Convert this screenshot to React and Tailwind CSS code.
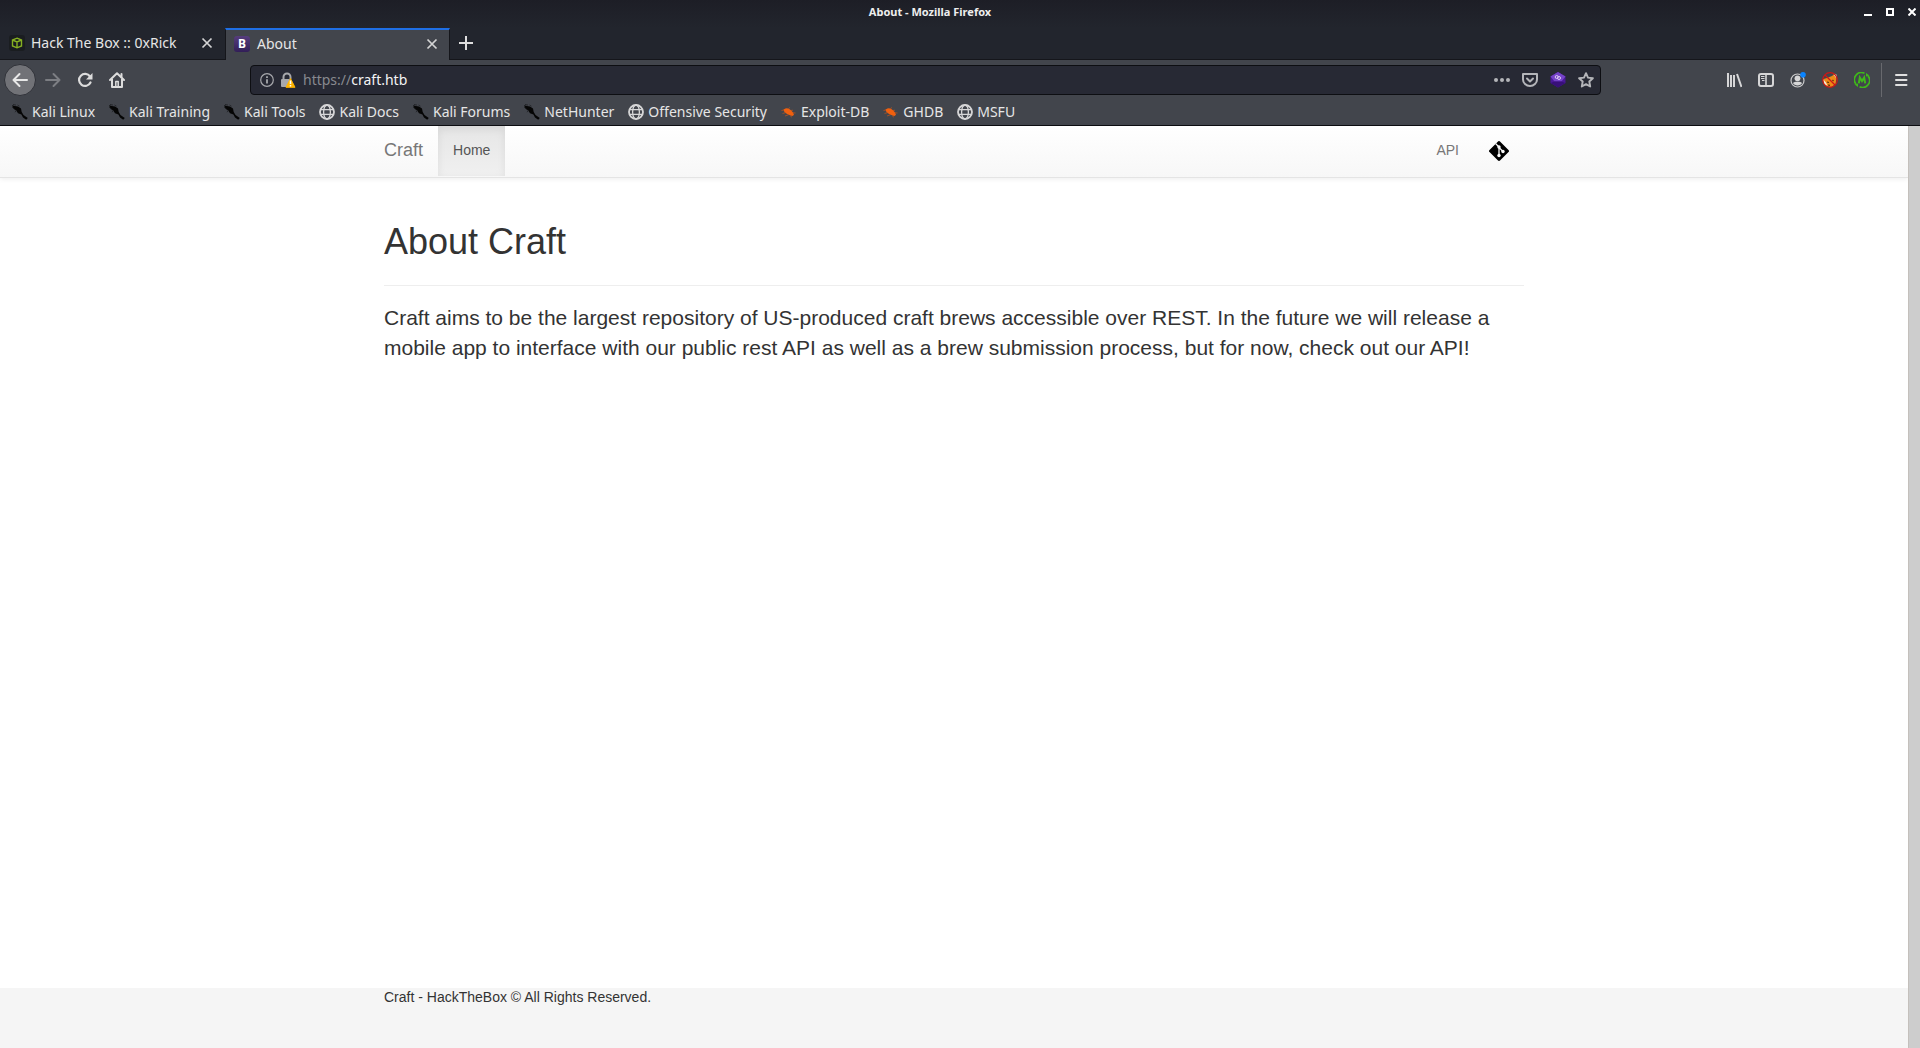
const ui = "font-['Noto_Sans',sans-serif]";
const web = "font-['Liberation_Sans',Arial,sans-serif]";

function Kali() {
  return (
    <svg className="size-4 shrink-0" viewBox="0 0 16 16" aria-hidden="true">
      <path d="M0 1.2 2.8 2 6 2.6 9 4.5 9.7 8 11.5 11 15.8 14 14.2 15.8 11 13.4 9.4 10.5 6 9.3 4.2 6.6 1.5 4.4Z" fill="#050505" />
      <path d="M1 .4 4 1.1M0 3l3 2.6M4.5 6 3 8.2M5.5 1l2 1.2" stroke="#1b1c20" strokeWidth=".7" fill="none" />
    </svg>
  );
}

function Globe() {
  return (
    <svg className="size-4 shrink-0" viewBox="0 0 16 16" fill="none" stroke="#d6d6d7" strokeWidth="1.3" aria-hidden="true">
      <circle cx="8" cy="8" r="7" strokeWidth="1.8" />
      <ellipse cx="8" cy="8" rx="3.4" ry="7" />
      <path d="M1 5.6h14M1 10.4h14" />
    </svg>
  );
}

function Bug() {
  return (
    <svg className="size-4 shrink-0" viewBox="0 0 16 16" aria-hidden="true">
      <path d="M2.500 5.500 5 4.200 7.500 4.500 10 6.200 12 8.500 13 10.800 11.500 12 9.500 11.600 6.500 10.200 3.500 8.200Z" fill="#f0600f" />
      <path d="M.5 6.500 3 6M1.500 9.500l3-.8M4 12 7.500 10.800M9 11.500l2 1.800M7.500 4.500l1.500-1M10 6.500l2-.3M12 8.800l2.500.2" stroke="#b2531f" strokeWidth=".8" fill="none" />
    </svg>
  );
}

const bookmarks = [
  ["Kali Linux", Kali],
  ["Kali Training", Kali],
  ["Kali Tools", Kali],
  ["Kali Docs", Globe],
  ["Kali Forums", Kali],
  ["NetHunter", Kali],
  ["Offensive Security", Globe],
  ["Exploit-DB", Bug],
  ["GHDB", Bug],
  ["MSFU", Globe],
];

function CloseIcon() {
  return (
    <svg className="size-3" viewBox="0 0 12 12" fill="none" stroke="#d4d4d5" strokeWidth="1.7" aria-hidden="true">
      <path d="M1.5 1.5l9 9M10.5 1.5l-9 9" />
    </svg>
  );
}

function TitleBar() {
  return (
    <div className="relative flex h-7 items-center justify-end bg-linear-to-b from-[#1d1e26] to-[#22252d]">
      <div className="absolute inset-x-0 top-0 pr-[60px] text-center text-[11px] leading-6 font-bold text-[#eeeeee]">About - Mozilla Firefox</div>
      <div className="relative mr-1 mb-1 flex items-center gap-[14px]">
        <button aria-label="Minimize" className="flex h-2 w-2 items-end"><span className="h-0.5 w-2 bg-white" /></button>
        <button aria-label="Maximize" className="size-2 border-2 border-white" />
        <button aria-label="Close" className="size-2">
          <svg viewBox="0 0 8 8" className="size-2" stroke="#fff" strokeWidth="2" aria-hidden="true"><path d="M.5.5l7 7M7.5.5l-7 7" /></svg>
        </button>
      </div>
    </div>
  );
}

function Tabs() {
  return (
    <div className="flex h-8 border-b border-[#15161b] bg-[#22252d] text-sm text-[#e6e6e6]">
      <div className="flex w-[225px] items-center pr-3 pb-px pl-[9px]">
        <svg className="size-4" viewBox="0 0 16 16" aria-hidden="true">
          <rect width="16" height="16" rx="3" fill="#1a1d20" />
          <path d="M8 3.200 12.500 5v6L8 12.800 3.500 11V5ZM3.500 5 8 7 12.500 5M8 7v5.500" fill="none" stroke="#86b022" strokeWidth="1.400" />
        </svg>
        <span className="ml-1.5 flex-1">Hack The Box :: 0xRick</span>
        <button aria-label="Close Hack The Box tab"><CloseIcon /></button>
      </div>
      <div className="-mb-px flex w-[225px] items-center border-t-2 border-r border-l border-t-[#1f6fe5] border-r-[#15161b] border-l-[#15161b] bg-[#42454c] pr-[11px] pb-[3px] pl-2">
        <span className="flex size-4 items-center justify-center rounded-[3px] bg-linear-to-b from-[#563d7c] to-[#321e58] text-xs font-bold text-white">B</span>
        <span className="ml-[7px] flex-1">About</span>
        <button aria-label="Close About tab"><CloseIcon /></button>
      </div>
      <button aria-label="New tab" className="ml-2 flex items-center pb-px">
        <svg className="size-4" viewBox="0 0 16 16" stroke="#dedede" strokeWidth="2" aria-hidden="true"><path d="M1 8h14M8 1v14" /></svg>
      </button>
    </div>
  );
}

function Toolbar() {
  return (
    <div className="flex h-10 items-center bg-[#42454c] pr-3 pl-1">
      <button aria-label="Back" className="flex size-8 items-center justify-center rounded-full border border-[#303239] bg-[#717277]">
        <svg className="size-4" viewBox="0 0 16 16" fill="none" stroke="#e8e8e8" strokeWidth="2" strokeLinecap="round" strokeLinejoin="round" aria-hidden="true"><path d="M15 8H1.5M7.5 2l-6 6 6 6" /></svg>
      </button>
      <button aria-label="Forward" className="ml-[9px]" disabled>
        <svg className="size-4" viewBox="0 0 16 16" fill="none" stroke="#7c7e83" strokeWidth="2" strokeLinecap="round" strokeLinejoin="round" aria-hidden="true"><path d="M1 8h13.5M8.500 2l6 6-6 6" /></svg>
      </button>
      <button aria-label="Reload" className="ml-4">
        <svg className="size-4" viewBox="0 0 16 16" fill="none" stroke="#dcdcdc" strokeWidth="2.2" strokeLinecap="round" aria-hidden="true"><path d="M13.500 10.500a6 6 0 1 1-.5-6" /><path d="M15.500 1v6.500H9Z" fill="#dcdcdc" stroke="none" /></svg>
      </button>
      <button aria-label="Home" className="ml-4">
        <svg className="size-4" viewBox="0 0 16 16" fill="none" stroke="#dcdcdc" strokeWidth="2" strokeLinecap="round" strokeLinejoin="round" aria-hidden="true"><path d="M1 8 8 1.300 15 8M3 7v8h10V7" /><path d="M6.800 14.500V9.500h2.400v5" strokeWidth="1.500" /><path d="M12.500 2v3" /></svg>
      </button>
      <div className="ml-[125px] flex h-[30px] flex-1 items-center rounded-[4px] border border-[#0d0e12] bg-[#272934] pr-1.5 pl-[9px]">
        <svg className="size-[14px]" viewBox="0 0 14 14" fill="none" stroke="#a7a8ac" aria-hidden="true"><circle cx="7" cy="7" r="6.300" strokeWidth="1.200" /><path d="M7 6.200v4.300M7 3.300v1.700" strokeWidth="1.800" /></svg>
        <svg className="ml-1.5 size-4" viewBox="0 0 16 16" aria-hidden="true">
          <path d="M3.500 8V5a3.500 3.500 0 0 1 7 0v2" fill="none" stroke="#a7a8ac" strokeWidth="2" />
          <rect x="1" y="7" width="9" height="8" rx="1" fill="#a7a8ac" />
          <path d="M10.500 6.500 15 15.300H6Z" fill="#ffb400" stroke="#ffb400" strokeLinejoin="round" />
          <path d="M10.500 8.500v3.500M10.500 13v1.500" stroke="#fff" strokeWidth="1.500" />
        </svg>
        <div className="relative ml-[7px] flex-1 text-sm leading-7">
          <span aria-hidden="true" className="pointer-events-none absolute inset-0 text-[#88898f]">https://<span className="text-[#f4f4f4]">craft.htb</span></span>
          <input aria-label="Address" defaultValue="https://craft.htb" className="w-full bg-transparent text-transparent caret-white outline-none" />
        </div>
        <div className="flex items-center gap-3">
          <button aria-label="Page actions">
            <svg className="size-4" viewBox="0 0 16 16" fill="#b4b5b9" aria-hidden="true"><circle cx="2" cy="8" r="2" /><circle cx="8" cy="8" r="2" /><circle cx="14" cy="8" r="2" /></svg>
          </button>
          <button aria-label="Save to Pocket">
            <svg className="size-4" viewBox="0 0 16 16" fill="none" stroke="#b4b5b9" strokeWidth="2" strokeLinecap="round" strokeLinejoin="round" aria-hidden="true"><path d="M1 2h14v5.500a7 6.500 0 0 1-14 0Z" /><path d="m5 6.500 3 3 3-3" /></svg>
          </button>
          <button aria-label="Extension">
            <svg className="size-4" viewBox="0 0 16 16" aria-hidden="true"><path d="M8 0 15.500 4.500v6.500L8 15.500.5 11V4.500Z" fill="#4a1998" /><path d="M8 0 15.500 4.500 11.500 9.500h-7L.5 4.500Z" fill="#7543c8" /><path d="M.5 11 4.500 9.500h7l4 1.500L8 15.500Z" fill="#381078" /><g fill="none" stroke="#ddc9f5"><circle cx="6.700" cy="5" r="1.500" /><circle cx="9" cy="6" r="1.500" /></g></svg>
          </button>
          <button aria-label="Bookmark this page">
            <svg className="size-4" viewBox="0 0 16 16" fill="none" stroke="#b4b5b9" strokeWidth="1.900" strokeLinejoin="round" aria-hidden="true"><path d="m8 1.200 2 4.400 4.900.6-3.600 3.300.9 5L8 12.100l-4.200 2.400.9-5L1.100 6.200 6 5.600Z" /></svg>
          </button>
        </div>
      </div>
      <div className="ml-[125px] flex items-center gap-4">
        <button aria-label="Library">
          <svg className="size-4" viewBox="0 0 16 16" fill="none" stroke="#d6d6d7" strokeWidth="2" aria-hidden="true"><path d="M2 1v14M5 3v12M8 3v12M11 2l4.500 13" /></svg>
        </button>
        <button aria-label="Sidebars">
          <svg className="size-4" viewBox="0 0 16 16" fill="none" stroke="#d6d6d7" aria-hidden="true"><rect x="1" y="2" width="14" height="12" rx="2" strokeWidth="2" /><path d="M8 2v12" strokeWidth="1.600" /><path d="M3 4.500h3.500M3 6.500h3.500M4 8.500h2.500" /></svg>
        </button>
        <button aria-label="Account">
          <svg className="size-4" viewBox="0 0 16 16" aria-hidden="true"><circle cx="7.500" cy="8.500" r="6.500" fill="none" stroke="#c9cacb" strokeWidth="1.200" /><circle cx="7.500" cy="6.300" r="2.900" fill="#d6d6d7" /><path d="M3 11c1-1.800 8-1.800 9 0-1 3.200-8 3.200-9 0Z" fill="#d6d6d7" /><circle cx="13" cy="2.800" r="2.800" fill="#0a84ff" /></svg>
        </button>
        <button aria-label="FoxyProxy">
          <svg className="size-4" viewBox="0 0 16 16" aria-hidden="true"><path d="M1.500 7 5 6l5-2 3-2.500 1.500 4.500-1 6-4 3-6-1L1 9Z" fill="#ed8a17" /><path d="m11.500 2.500 3 0v4ZM1 7l3 3.500 1.500 3.500-3-2Z" fill="#f4ead9" /><path d="m5 10 2 .5M10.500 8l1 1M6 13l2 .3" stroke="#542b0c" strokeWidth="1.200" /><circle cx="8" cy="8" r="7.300" fill="none" stroke="#cf1616" strokeWidth="1.200" /><path d="m3 3 10 10" stroke="#cf1616" strokeWidth="1.300" /></svg>
        </button>
        <button aria-label="Proxy switcher">
          <svg className="size-4" viewBox="0 0 16 16" fill="none" stroke="#3fb91a" strokeWidth="1.700" aria-hidden="true"><path d="M10.500 1.300A7 7 0 0 0 2 12M5.500 14.700A7 7 0 0 0 14 4" /><path d="m.5 12.500 3.500-1v3.500ZM15.500 3.500l-3.500 1V1Z" fill="#3fb91a" stroke="none" /><path d="M4.800 11.300 5.800 5.500 8 9l2.200-3.500 1 5.800" strokeWidth="2" /></svg>
        </button>
      </div>
      <div className="ml-[11px] h-[34px] w-px bg-[#68696e]" />
      <button aria-label="Open menu" className="ml-3">
        <svg className="size-[14px]" viewBox="0 0 14 14" stroke="#e0e0e0" strokeWidth="2" strokeLinecap="round" aria-hidden="true"><path d="M2 2h10.500M2 7h10.500M2 12h10.500" /></svg>
      </button>
    </div>
  );
}

function Bookmarks() {
  return (
    <nav aria-label="Bookmarks" className="flex h-[26px] items-start gap-[14px] border-b border-[#0d0e12] bg-[#42454c] px-3 pt-0.5 text-sm leading-5 text-[#e6e6e6]">
      {bookmarks.map(([label, Icon]) => (
        <a key={label} href="#" className="flex items-center gap-1 whitespace-nowrap"><Icon />{label}</a>
      ))}
    </nav>
  );
}

function Page() {
  return (
    <div className={`flex flex-1 bg-white text-sm text-[#333333] ${web}`}>
      <div className="flex flex-1 flex-col">
        <header className="border-b border-[#e4e4e4] bg-linear-to-b from-white to-[#f7f7f7] shadow-[0_1px_5px_rgba(0,0,0,0.075)]">
          <nav aria-label="Main" className="mx-auto flex h-[51px] max-w-[1170px] items-start px-[15px] leading-5 text-[#777777]">
            <a href="#" className="py-[14px] pr-[15px] text-lg leading-5">Craft</a>
            <a href="#" className="bg-linear-to-b from-[#e6e6e6] to-[#f0f0f0] px-[15px] pt-[14px] pb-4 text-[#555555] shadow-[inset_0_3px_9px_rgba(0,0,0,0.075)]">Home</a>
            <a href="#" className="ml-auto px-[15px] pt-[14px] pb-4">API</a>
            <a href="#" aria-label="Git repository" className="px-[15px] py-[15px]">
              <svg className="size-5" viewBox="0 0 20 20" aria-hidden="true"><path d="M9 .5a1.400 1.400 0 0 1 2 0L19.500 9a1.400 1.400 0 0 1 0 2L11 19.500a1.400 1.400 0 0 1-2 0L.5 11a1.400 1.400 0 0 1 0-2Z" fill="#000" /><path d="M6.500 2.500 10 6v9M10 6.500l4 4" stroke="#fafafa" strokeWidth="1.300" /><g fill="#fafafa"><circle cx="10" cy="6" r="1.700" /><circle cx="10" cy="14.500" r="1.700" /><circle cx="14" cy="10.500" r="1.700" /></g></svg>
            </a>
          </nav>
        </header>
        <main className="mx-auto w-full max-w-[1170px] flex-1 px-[15px] pt-11">
          <h1 className="text-4xl leading-10">About Craft</h1>
          <hr className="mt-[23px] border-[#eeeeee]" />
          <p className="mt-[17px] text-[21px] leading-[30px]">
            Craft aims to be the largest repository of US-produced craft brews accessible over REST. In the future we will release a mobile app to interface with our public rest API as well as a brew submission process, but for now, check out our API!
          </p>
        </main>
        <footer className="h-[60px] bg-[#f5f5f5]">
          <p className="mx-auto max-w-[1170px] px-[15px] leading-[18px]">Craft - HackTheBox © All Rights Reserved.</p>
        </footer>
      </div>
      <div className="w-3 border-l border-[#c4c0bc] bg-[#cdcdcd]" />
    </div>
  );
}

export default function App() {
  return (
    <div className={`flex min-h-screen flex-col ${ui}`}>
      <TitleBar />
      <Tabs />
      <Toolbar />
      <Bookmarks />
      <Page />
    </div>
  );
}
